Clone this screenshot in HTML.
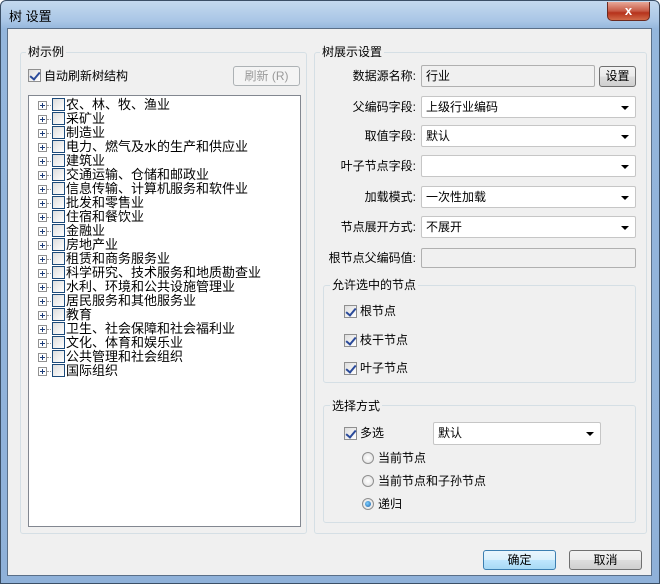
<!DOCTYPE html>
<html><head><meta charset="utf-8"><style>
*{box-sizing:border-box;margin:0;padding:0}
body{width:660px;height:584px;overflow:hidden;font-family:"Liberation Sans","Noto Sans CJK SC","WenQuanYi Zen Hei",sans-serif;font-size:12px;color:#000;background:#fff}
.win{position:absolute;left:0;top:0;width:660px;height:584px;background:linear-gradient(180deg,#c4d9ee 0%,#a9c6e6 20px,#94b6dc 28px,#8fb1d9 100%);border:1px solid #3b4f66;border-radius:6px 6px 0 0}
.title{position:absolute;left:8px;top:5px;font-size:13px;color:#000}
.close{position:absolute;left:606px;top:1px;width:43px;height:19px;border:1px solid #6b2a20;border-top:none;border-radius:0 0 5px 5px;background:linear-gradient(180deg,#e8a898,#c75a45 50%,#b6321c 60%,#d26a48);color:#fff;font-weight:bold;text-align:center;line-height:17px;font-size:13px}
.client{position:absolute;left:7px;top:28px;width:645px;height:548px;background:#f0f0f0;border:1px solid #5a6f88}
.a{position:absolute}
.grp{position:absolute;border:1px solid #d5dfe5;border-radius:3px}
.gt{position:absolute;background:#f0f0f0;padding:0 2px;line-height:14px}
.lbl{position:absolute;text-align:right;width:120px;line-height:22px}
.cb{position:absolute;width:13px;height:13px;border:1px solid #8f8f8f;background:linear-gradient(135deg,#ddd,#fff)}
.cb.c::after{content:"";position:absolute;left:3px;top:0px;width:4px;height:8px;border:solid #2a4a9a;border-width:0 2px 2px 0;transform:rotate(40deg)}
.combo{position:absolute;height:22px;background:#fff;border:1px solid #c6c6c6;border-radius:2px;line-height:20px;padding-left:4px}
.combo::after{content:"";position:absolute;right:6px;top:9px;border:4px solid transparent;border-top:4px solid #000;border-bottom:0}
.ro{position:absolute;height:22px;background:#f0f0f0;border:1px solid #b0b0b0;border-radius:2px;line-height:20px;padding-left:4px}
.btn{position:absolute;border:1px solid #707070;border-radius:3px;background:linear-gradient(180deg,#f2f2f2,#ebebeb 50%,#dddddd 51%,#cfcfcf);text-align:center}
.rad{position:absolute;width:12px;height:12px;border:1px solid #8f8f8f;border-radius:50%;background:radial-gradient(#fff,#ddd)}
.rad.on::after{content:"";position:absolute;left:2px;top:2px;width:6px;height:6px;border-radius:50%;background:radial-gradient(circle at 40% 40%,#7fd0ff,#1a5fa8)}
.tree{position:absolute;left:28px;top:95px;width:273px;height:432px;background:#fff;border:1px solid #828790}
.row{position:absolute;left:0;height:14px;line-height:14px;font-size:13px}
.ex{position:absolute;left:9px;top:3px;width:9px;height:9px;border:1px solid #919191;background:#fff}
.ex::before{content:"";position:absolute;left:1px;top:3px;width:5px;height:1px;background:#1d3d7a}
.ex::after{content:"";position:absolute;left:3px;top:1px;width:1px;height:5px;background:#1d3d7a}
.dot{position:absolute;left:18px;top:7px;width:4px;border-top:1px dotted #999}
.tcb{position:absolute;left:23px;top:0;width:13px;height:13px;border:1px solid #1c4a7a;background:linear-gradient(135deg,#ddd,#fff)}
.tt{position:absolute;left:37px;top:0;white-space:nowrap}
</style></head><body>
<div class="win">
<div class="title">树 设置</div>
<div class="close">x</div>
</div>
<div class="client"></div>

<!-- left group -->
<div class="grp" style="left:20px;top:52px;width:287px;height:482px"></div>
<div class="gt" style="left:26px;top:45px">树示例</div>
<div class="cb c" style="left:28px;top:69px"></div>
<div class="a" style="left:44px;top:68px;line-height:16px">自动刷新树结构</div>
<div class="btn" style="left:233px;top:66px;width:67px;height:20px;color:#9a9a9a;line-height:18px;border-color:#adb2b5;background:#f4f4f4">刷新 (R)</div>
<div class="tree">
<div class="row" style="top:2px"><span class="ex"></span><span class="dot"></span><span class="tcb"></span><span class="tt">农、林、牧、渔业</span></div>
<div class="row" style="top:16px"><span class="ex"></span><span class="dot"></span><span class="tcb"></span><span class="tt">采矿业</span></div>
<div class="row" style="top:30px"><span class="ex"></span><span class="dot"></span><span class="tcb"></span><span class="tt">制造业</span></div>
<div class="row" style="top:44px"><span class="ex"></span><span class="dot"></span><span class="tcb"></span><span class="tt">电力、燃气及水的生产和供应业</span></div>
<div class="row" style="top:58px"><span class="ex"></span><span class="dot"></span><span class="tcb"></span><span class="tt">建筑业</span></div>
<div class="row" style="top:72px"><span class="ex"></span><span class="dot"></span><span class="tcb"></span><span class="tt">交通运输、仓储和邮政业</span></div>
<div class="row" style="top:86px"><span class="ex"></span><span class="dot"></span><span class="tcb"></span><span class="tt">信息传输、计算机服务和软件业</span></div>
<div class="row" style="top:100px"><span class="ex"></span><span class="dot"></span><span class="tcb"></span><span class="tt">批发和零售业</span></div>
<div class="row" style="top:114px"><span class="ex"></span><span class="dot"></span><span class="tcb"></span><span class="tt">住宿和餐饮业</span></div>
<div class="row" style="top:128px"><span class="ex"></span><span class="dot"></span><span class="tcb"></span><span class="tt">金融业</span></div>
<div class="row" style="top:142px"><span class="ex"></span><span class="dot"></span><span class="tcb"></span><span class="tt">房地产业</span></div>
<div class="row" style="top:156px"><span class="ex"></span><span class="dot"></span><span class="tcb"></span><span class="tt">租赁和商务服务业</span></div>
<div class="row" style="top:170px"><span class="ex"></span><span class="dot"></span><span class="tcb"></span><span class="tt">科学研究、技术服务和地质勘查业</span></div>
<div class="row" style="top:184px"><span class="ex"></span><span class="dot"></span><span class="tcb"></span><span class="tt">水利、环境和公共设施管理业</span></div>
<div class="row" style="top:198px"><span class="ex"></span><span class="dot"></span><span class="tcb"></span><span class="tt">居民服务和其他服务业</span></div>
<div class="row" style="top:212px"><span class="ex"></span><span class="dot"></span><span class="tcb"></span><span class="tt">教育</span></div>
<div class="row" style="top:226px"><span class="ex"></span><span class="dot"></span><span class="tcb"></span><span class="tt">卫生、社会保障和社会福利业</span></div>
<div class="row" style="top:240px"><span class="ex"></span><span class="dot"></span><span class="tcb"></span><span class="tt">文化、体育和娱乐业</span></div>
<div class="row" style="top:254px"><span class="ex"></span><span class="dot"></span><span class="tcb"></span><span class="tt">公共管理和社会组织</span></div>
<div class="row" style="top:268px"><span class="ex"></span><span class="dot"></span><span class="tcb"></span><span class="tt">国际组织</span></div>
</div>

<!-- right group -->
<div class="grp" style="left:314px;top:52px;width:333px;height:482px"></div>
<div class="gt" style="left:320px;top:45px">树展示设置</div>
<div class="lbl" style="left:296px;top:65px">数据源名称:</div>
<div class="ro" style="left:421px;top:65px;width:174px">行业</div>
<div class="btn" style="left:599px;top:66px;width:37px;height:21px;line-height:19px">设置</div>
<div class="lbl" style="left:296px;top:96px">父编码字段:</div>
<div class="combo" style="left:421px;top:96px;width:215px">上级行业编码</div>
<div class="lbl" style="left:296px;top:125px">取值字段:</div>
<div class="combo" style="left:421px;top:125px;width:215px">默认</div>
<div class="lbl" style="left:296px;top:155px">叶子节点字段:</div>
<div class="combo" style="left:421px;top:155px;width:215px"></div>
<div class="lbl" style="left:296px;top:186px">加载模式:</div>
<div class="combo" style="left:421px;top:186px;width:215px">一次性加载</div>
<div class="lbl" style="left:296px;top:216px">节点展开方式:</div>
<div class="combo" style="left:421px;top:216px;width:215px">不展开</div>
<div class="lbl" style="left:296px;top:247px">根节点父编码值:</div>
<div class="ro" style="left:421px;top:248px;width:215px;height:20px"></div>

<div class="grp" style="left:323px;top:285px;width:313px;height:98px"></div>
<div class="gt" style="left:330px;top:278px">允许选中的节点</div>
<div class="cb c" style="left:344px;top:305px"></div><div class="a" style="left:360px;top:303px;line-height:16px">根节点</div>
<div class="cb c" style="left:344px;top:334px"></div><div class="a" style="left:360px;top:332px;line-height:16px">枝干节点</div>
<div class="cb c" style="left:344px;top:362px"></div><div class="a" style="left:360px;top:360px;line-height:16px">叶子节点</div>

<div class="grp" style="left:323px;top:405px;width:313px;height:118px"></div>
<div class="gt" style="left:330px;top:399px">选择方式</div>
<div class="cb c" style="left:344px;top:427px"></div><div class="a" style="left:360px;top:425px;line-height:16px">多选</div>
<div class="combo" style="left:433px;top:422px;width:168px;height:23px">默认</div>
<div class="rad" style="left:362px;top:452px"></div><div class="a" style="left:378px;top:450px;line-height:16px">当前节点</div>
<div class="rad" style="left:362px;top:475px"></div><div class="a" style="left:378px;top:473px;line-height:16px">当前节点和子孙节点</div>
<div class="rad on" style="left:362px;top:498px"></div><div class="a" style="left:378px;top:496px;line-height:16px">递归</div>

<div class="btn" style="left:483px;top:550px;width:73px;height:20px;line-height:18px;border-color:#3c7fb1;background:linear-gradient(180deg,#eaf6fd,#d9f0fc 50%,#bee6fd 51%,#a7d9f5)">确定</div>
<div class="btn" style="left:569px;top:550px;width:73px;height:20px;line-height:18px">取消</div>
</body></html>
